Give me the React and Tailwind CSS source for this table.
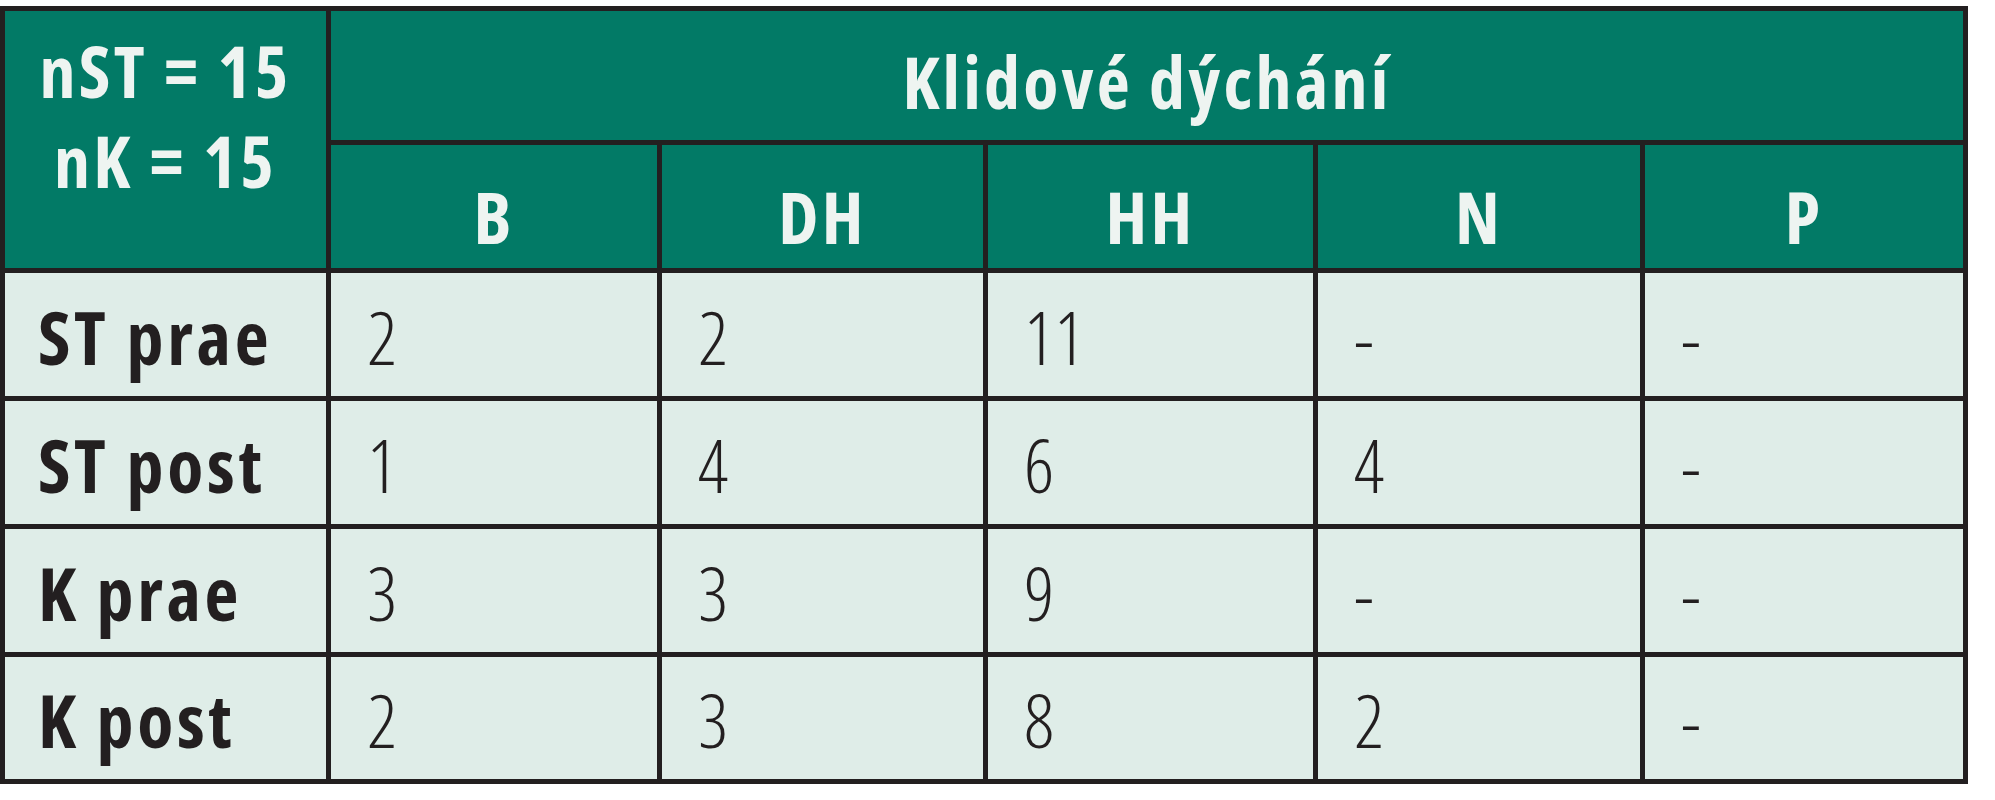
export default function App() {
  const rows = [
    ["ST prae", "2", "2", "11", "-", "-"],
    ["ST post", "1", "4", "6", "4", "-"],
    ["K prae", "3", "3", "9", "-", "-"],
    ["K post", "2", "3", "8", "2", "-"],
  ];
  const cell = "border-[5px] border-[#231f20]";
  const head = `${cell} bg-[#027a66] text-[#eef4f1] font-bold tracking-[0.045em]`;
  return (
    <div className="w-[1995px] h-[800px] bg-white pt-[6px] font-['Open_Sans',sans-serif] [font-stretch:condensed]">
      <table className="border-collapse w-[1968px] table-fixed">
        <colgroup>
          <col className="w-[326px]" />
          <col className="w-[331px]" />
          <col className="w-[326px]" />
          <col className="w-[330px]" />
          <col className="w-[327px]" />
          <col className="w-[323px]" />
        </colgroup>
        <thead>
          <tr className="h-[134px]">
            <th rowSpan={2} className={`${head} text-[72px] leading-[90px] align-top pt-[14px]`}>
              <div>nST = 15</div>
              <div>nK = 15</div>
            </th>
            <th colSpan={5} className={`${head} text-[72px] leading-none pt-[10px]`}>
              Klidové dýchání
            </th>
          </tr>
          <tr className="h-[128px]">
            {["B", "DH", "HH", "N", "P"].map((h) => (
              <th key={h} className={`${head} text-[72px] leading-none pt-[18px]`}>
                {h}
              </th>
            ))}
          </tr>
        </thead>
        <tbody>
          {rows.map((r, ri) => (
            <tr key={r[0]} className={ri === 3 ? "h-[127px]" : "h-[128px]"}>
              {r.map((v, i) => (
                <td
                  key={i}
                  className={`${cell} bg-[#dfede8] text-[#231f20] text-[74px] leading-none text-left pt-[4px] ${
                    i === 0 ? "font-bold pl-[33px] tracking-[0.05em]" : "font-light pl-[36px]"
                  }`}
                >
                  {v}
                </td>
              ))}
            </tr>
          ))}
        </tbody>
      </table>
    </div>
  );
}
